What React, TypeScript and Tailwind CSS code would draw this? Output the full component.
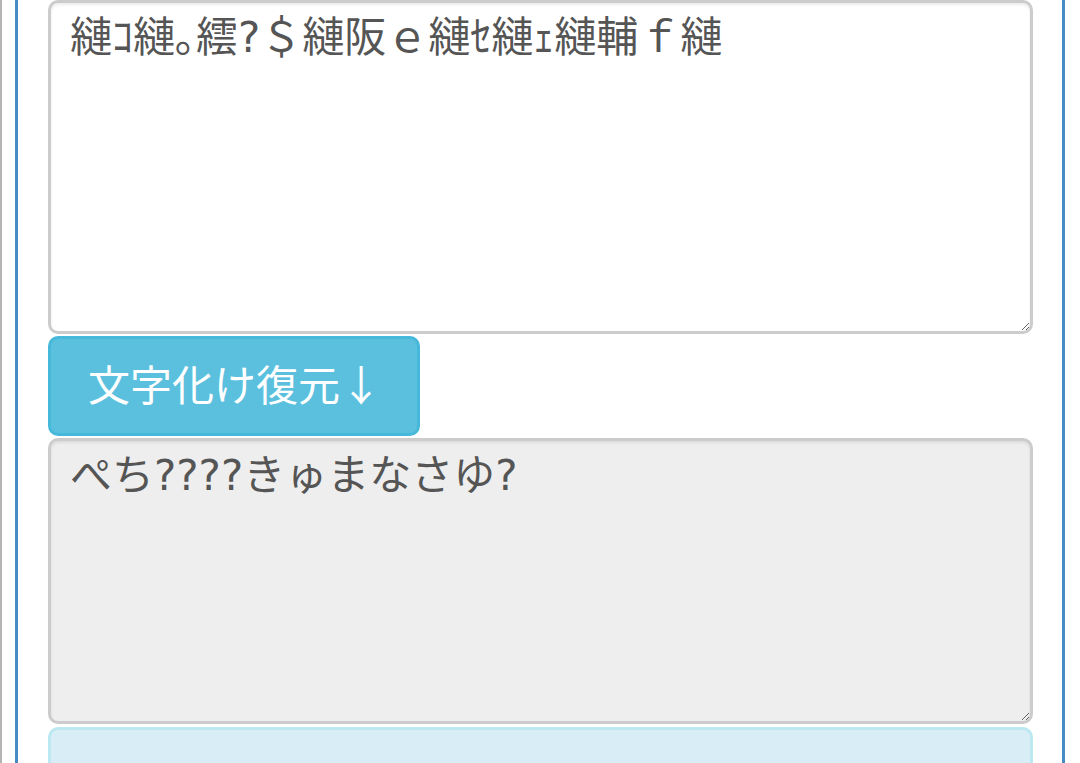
import { useState } from 'react';

const FONT = '"Noto Sans CJK JP", "Noto Sans", sans-serif';
const FIELD_FONT = '"DejaVu Sans", "Noto Sans CJK JP", sans-serif';

export default function App() {
  const [input, setInput] = useState('縺ｺ縺｡繧?＄縺阪ｅ縺ｾ縺ｪ縺輔ｆ縺');
  const [output] = useState('ぺち????きゅまなさゆ?');

  return (
    <div className="h-[763px] overflow-hidden bg-white flex" style={{ fontFamily: FONT }}>
      <div className="w-[2px] bg-[#b4b4b4] shrink-0" />
      <div className="w-[13px] shrink-0" />
      <div className="w-[1050px] shrink-0 border-x-[3px] border-[#4a8ac4] pl-[30px] pr-[29px] pt-0 flex flex-col">
        <textarea
          value={input}
          onChange={(e) => setInput(e.target.value)}
          className="h-[334px] shrink-0 w-full resize-y rounded-[10px] border-[3px] border-[#cccccc] bg-white px-[19px] py-[8px] text-[42px] leading-[1.3] text-[#555] shadow-[inset_0_2px_3px_rgba(0,0,0,0.08)] outline-none"
          style={{ fontFamily: FIELD_FONT }}
        />
        <button
          className="mt-[2px] h-[100px] shrink-0 w-[372px] rounded-[10px] border-[3px] border-[#46b8da] bg-[#5bc0de] pb-[6px] text-[42px] leading-none text-white text-left pl-[37px]"
          style={{ fontFamily: FONT }}
        >
          文字化け復元↓
        </button>
        <textarea
          value={output}
          readOnly
          className="mt-[2px] h-[286px] shrink-0 w-full resize-y rounded-[10px] border-[3px] border-[#cccccc] bg-[#eeeeee] px-[19px] py-[8px] text-[42px] leading-[1.3] text-[#555] shadow-[inset_0_2px_3px_rgba(0,0,0,0.08)] outline-none"
          style={{ fontFamily: FIELD_FONT }}
        />
        <div className="mt-[3px] h-[100px] shrink-0 w-full rounded-[10px] border-[3px] border-[#bce8f1] bg-[#d9edf7]" />
      </div>
    </div>
  );
}
